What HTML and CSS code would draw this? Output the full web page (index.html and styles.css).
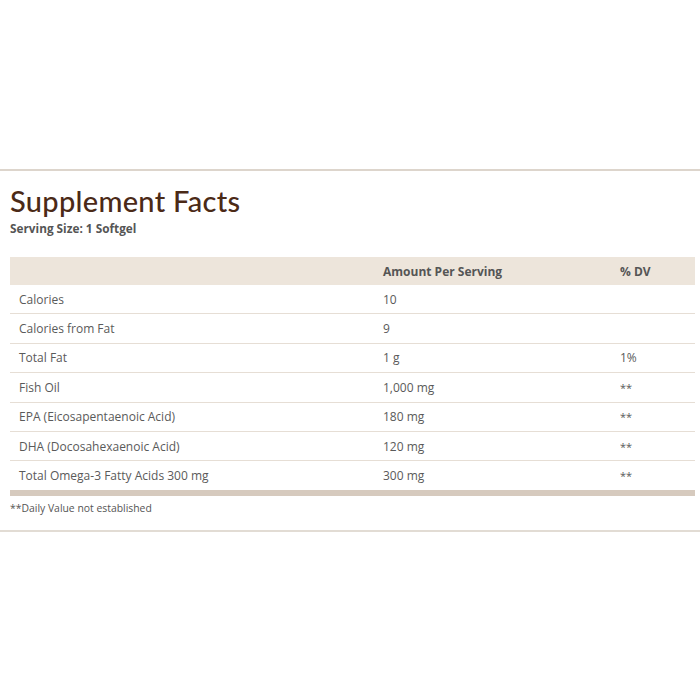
FILE: index.html
```html
<!DOCTYPE html>
<html>
<head>
<meta charset="utf-8">
<link rel="stylesheet" href="styles.css">
</head>
<body>
<section class="facts">
  <h1 class="title">Supplement Facts</h1>
  <p class="serving">Serving Size: 1 Softgel</p>
  <table class="table">
    <thead>
      <tr><th class="c1"></th><th class="c2">Amount Per Serving</th><th class="c3">% DV</th></tr>
    </thead>
    <tbody>
      <tr><td>Calories</td><td>10</td><td></td></tr>
      <tr><td>Calories from Fat</td><td>9</td><td></td></tr>
      <tr><td>Total Fat</td><td>1 g</td><td>1%</td></tr>
      <tr><td>Fish Oil</td><td>1,000 mg</td><td class="star">**</td></tr>
      <tr><td>EPA (Eicosapentaenoic Acid)</td><td>180 mg</td><td class="star">**</td></tr>
      <tr><td>DHA (Docosahexaenoic Acid)</td><td>120 mg</td><td class="star">**</td></tr>
      <tr><td>Total Omega-3 Fatty Acids 300 mg</td><td>300 mg</td><td class="star">**</td></tr>
    </tbody>
  </table>
  <p class="note">**Daily Value not established</p>
</section>
</body>
</html>
```
FILE: styles.css
```css
html, body {
  margin: 0;
  padding: 0;
  background: #ffffff;
}
body {
  font-family: "Open Sans", "Liberation Sans", sans-serif;
  color: #5a5a5a;
}
.facts {
  margin-top: 169px;
  border-top: 2px solid #ddd5cc;
  border-bottom: 2px solid #e2dcd4;
  padding: 12px 5px 15px 10px;
}
.title {
  margin: 0;
  font-family: "Lato", "Liberation Sans", sans-serif;
  font-weight: 500;
  font-size: 29px;
  line-height: 36px;
  color: #4b2a17;
  letter-spacing: 0.3px;
}
.serving {
  margin: 1px 0 0;
  font-size: 11.8px;
  font-weight: 700;
  line-height: 16px;
  color: #555555;
}
.table {
  margin-top: 21px;
  width: 100%;
  border-collapse: collapse;
  font-size: 12px;
  border-bottom: 6px solid #d6cabe;
}
.table th {
  background: #ede5db;
  text-align: left;
  font-weight: 700;
  height: 28px;
  padding: 0 9px;
  color: #555555;
}
.table td {
  height: 28.4px;
  padding: 0 9px;
  border-top: 1px solid #e6ded5;
  color: #5a5a5a;
}
.table tbody tr:first-child td {
  border-top: none;
}
.c1 { width: 346px; }
.c2 { width: 219px; }
.star {
  color: #8a8a8a;
  font-size: 11px;
}
.note {
  margin: 5px 0 0;
  font-size: 10.4px;
  line-height: 14px;
  color: #555555;
}
```
